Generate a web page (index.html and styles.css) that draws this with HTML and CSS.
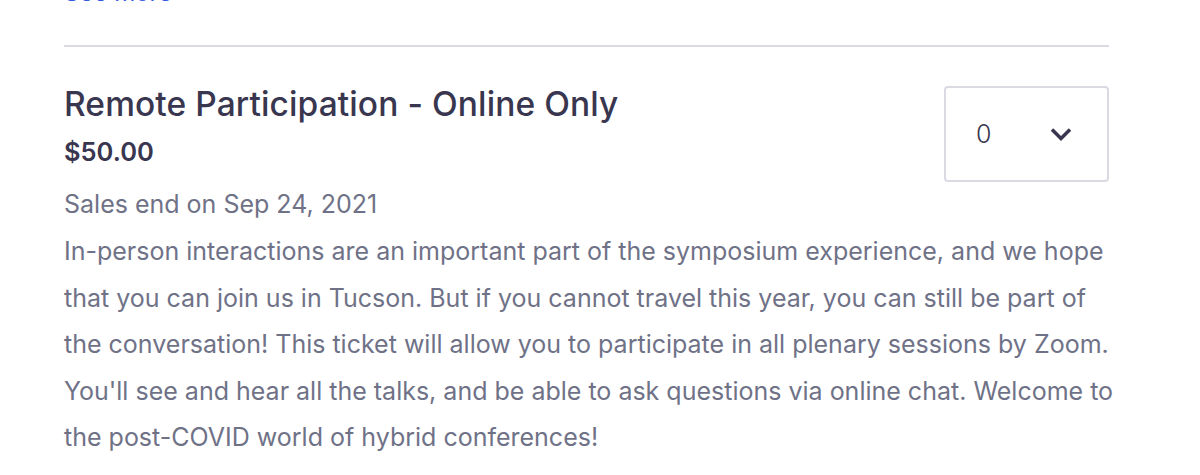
FILE: index.html
```html
<!DOCTYPE html>
<html lang="en">
<head>
<meta charset="utf-8">
<title>Ticket</title>
<link rel="stylesheet" href="styles.css">
</head>
<body>
<div class="page">
  <a class="see-more" href="#">See more</a>
  <hr class="divider">
  <section class="ticket">
    <div class="ticket-head">
      <div class="ticket-info">
        <h2 class="ticket-title">Remote Participation - Online Only</h2>
        <div class="ticket-price">$50.00</div>
        <div class="ticket-sales">Sales end on Sep 24, 2021</div>
      </div>
      <div class="qty">
        <span class="qty-value">0</span>
        <svg class="qty-chevron" width="24" height="24" viewBox="0 0 24 24" aria-hidden="true"><path d="M3 7.5 12 16.5l9-9" fill="none" stroke="#39364f" stroke-width="3.5"/></svg>
      </div>
    </div>
    <p class="ticket-desc">In-person interactions are an important part of the symposium experience, and we hope that you can join us in Tucson. But if you cannot travel this year, you can still be part of the conversation! This ticket will allow you to participate in all plenary sessions by Zoom. You'll see and hear all the talks, and be able to ask questions via online chat. Welcome to the post-COVID world of hybrid conferences!</p>
  </section>
</div>
</body>
</html>
```

FILE: styles.css
```css
html, body {
  margin: 0;
  padding: 0;
  background: #fff;
}
body {
  font-family: Inter, "Noto Sans", sans-serif;
  color: #39364f;
  overflow: hidden;
}
.page {
  width: 1045px;
  padding-left: 64px;
}
.see-more {
  display: block;
  margin-top: -22px;
  font-size: 24px;
  line-height: 30px;
  color: #3659e3;
  text-decoration: none;
}
.divider {
  margin: 37px 0 0;
  border: 0;
  height: 2px;
  background: #dbdae3;
}
.ticket-head {
  display: flex;
  justify-content: space-between;
  align-items: flex-start;
  margin-top: 37px;
}
.ticket-title {
  margin: 0;
  font-size: 33.5px;
  line-height: 40px;
  font-weight: 500;
  color: #39364f;
  letter-spacing: 0.1px;
}
.ticket-price {
  margin-top: 12px;
  font-size: 25.5px;
  line-height: 32px;
  font-weight: 600;
  color: #39364f;
}
.ticket-sales {
  margin-top: 20px;
  font-size: 25px;
  line-height: 32px;
  color: #6f7287;
}
.qty {
  width: 165px;
  height: 96px;
  border: 2px solid #dbdae3;
  border-radius: 4px;
  display: flex;
  align-items: center;
  justify-content: space-between;
  padding: 0 34px 0 30px;
  box-sizing: border-box;
  margin-top: 2px;
}
.qty-value {
  font-size: 25px;
  font-weight: 300;
  color: #39364f;
}
.ticket-desc {
  margin: 8px -8px 0 0;
  font-size: 25px;
  line-height: 46.5px;
  color: #6f7287;
}
```
